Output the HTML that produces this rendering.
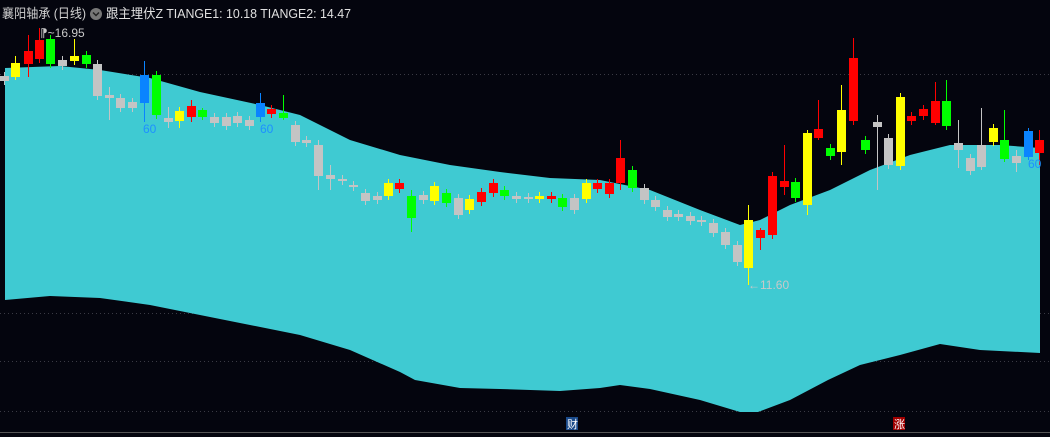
<!DOCTYPE html>
<html><head><meta charset="utf-8"><style>
html,body{margin:0;padding:0;background:#04050e;width:1050px;height:437px;overflow:hidden;font-family:"Liberation Sans","Noto Sans CJK SC",sans-serif}
svg{position:absolute;left:0;top:0}
</style></head><body>
<svg width="1050" height="437" viewBox="0 0 1050 437">
<g stroke="#3a3a44" stroke-dasharray="1,3" stroke-width="1">
<line x1="0" y1="74.5" x2="1050" y2="74.5"/><line x1="0" y1="313.5" x2="1050" y2="313.5"/><line x1="0" y1="361.5" x2="1050" y2="361.5"/><line x1="0" y1="411.5" x2="1050" y2="411.5"/>
</g>
<polygon fill="#3fcad2" points="5,68 60,66 100,70 150,78 200,92 260,105 300,115 350,140 400,155 450,165 500,172 550,178 600,180 650,190 700,210 740,225 760,220 790,205 830,190 870,170 910,155 950,145 1000,145 1040,148 1040,353 980,350 940,344 900,355 860,365 828,380 790,400 758,412 740,412 700,400 650,389 620,385 600,388 560,391 500,389 460,388 415,380 400,372 350,350 300,335 250,325 200,315 150,305 100,298 50,296 5,300"/>
<line x1="0" y1="432.5" x2="1050" y2="432.5" stroke="#555" stroke-width="1"/>
<g id="c" stroke-width="1"></g>
<text x="143" y="133" fill="#1e90ff" font-size="12">60</text>
<text x="260" y="133" fill="#1e90ff" font-size="12">60</text>
<text x="1028" y="168" fill="#1e90ff" font-size="12">60</text>
<text x="40" y="37" fill="#c8c8c8" font-size="12">⁋~16.95</text>
<text x="748" y="289" fill="#c8c8c8" font-size="12">←11.60</text>
<rect x="566" y="417" width="12" height="13" fill="#1a4a8a"/><text x="567" y="428" fill="#fff" font-size="11">财</text>
<rect x="893" y="417" width="12" height="13" fill="#a00000"/><text x="894" y="428" fill="#fff" font-size="11">涨</text>
<text x="2" y="18" fill="#d0d0d0" font-size="13" textLength="84" lengthAdjust="spacingAndGlyphs">襄阳轴承 (日线)</text>
<circle cx="96" cy="14" r="6" fill="#777"/><path d="M93 12.5l3 3 3-3" stroke="#222" stroke-width="1.5" fill="none"/>
<text x="106" y="18" fill="#e0e0e0" font-size="13" textLength="245" lengthAdjust="spacingAndGlyphs">跟主埋伏Z TIANGE1: 10.18 TIANGE2: 14.47</text>
</svg>
<script>
var d=[[4,76,81,'g'],[15,63,77,'y',56,80],[28,51,64,'r',35,77],[39,40,59,'r',28,63],[50,39,64,'G'],[62,60,66,'g'],[74,56,61,'y',39,65],[86,55,64,'G'],[97,64,96,'g'],[109,95,98,'g',87,120],[120,98,108,'g'],[132,102,108,'g'],[144,75,103,'b',61,122],[156,75,115,'G'],[168,118,122,'g',107,128],[179,111,121,'y',107,128],[191,106,117,'r',100,122],[202,110,117,'G',108,120],[214,117,123,'g'],[226,117,126,'g'],[237,116,123,'g'],[249,120,126,'g'],[260,103,117,'b',93,122],[271,109,114,'r'],[283,113,118,'G',95,120],[295,125,142,'g'],[306,140,143,'g'],[318,145,176,'g',140,190],[330,175,179,'g',165,190],[342,179,181,'g'],[353,185,187,'g'],[365,193,201,'g'],[377,196,200,'g'],[388,183,196,'y'],[399,183,189,'r'],[411,196,218,'G',190,232],[423,195,200,'g'],[434,186,201,'y'],[446,193,203,'G'],[458,198,215,'g'],[469,199,210,'y'],[481,192,202,'r'],[493,183,193,'r'],[504,190,196,'G'],[516,196,199,'g'],[528,197,199,'g'],[539,196,199,'y'],[551,196,199,'r'],[562,198,207,'G'],[574,198,210,'g'],[586,183,199,'y'],[597,183,189,'r'],[609,183,194,'r'],[620,158,183,'r',140,190],[632,170,188,'G'],[644,188,200,'g'],[655,200,207,'g'],[667,210,217,'g'],[678,214,217,'g'],[690,216,221,'g'],[701,220,222,'g'],[713,223,233,'g'],[725,232,245,'g'],[737,245,262,'g'],[748,220,268,'y',205,285],[760,230,238,'r',228,250],[772,176,235,'r'],[784,181,187,'r',145,195],[795,182,198,'G'],[807,133,205,'y',130,215],[818,129,138,'r',100,140],[830,148,156,'G'],[841,110,152,'y',85,165],[853,58,121,'r',38,125],[865,140,150,'G'],[877,122,127,'g',115,190],[888,138,165,'g'],[900,97,166,'y'],[911,116,121,'r'],[923,109,116,'r'],[935,101,123,'r',82,125],[946,101,126,'G',80,130],[958,143,150,'g',120,168],[970,158,171,'g'],[981,145,167,'g',108,170],[993,128,142,'y'],[1004,140,159,'G',110,162],[1016,156,163,'g',150,172],[1028,131,157,'b',128,160],[1039,140,153,'r',130,165]];
var col={g:'#c4c4c4',y:'#ffff00',r:'#ff0000',G:'#00ff00',b:'#0a84ff'};
var s='';d.forEach(function(c){var f=col[c[3]];var t=c[4]||c[1]-4,b=c[5]||c[2]+4;
s+='<line x1="'+(c[0]+.5)+'" x2="'+(c[0]+.5)+'" y1="'+t+'" y2="'+b+'" stroke="'+f+'"/>';
s+='<rect x="'+(c[0]-4)+'" y="'+c[1]+'" width="9" height="'+Math.max(2,c[2]-c[1])+'" fill="'+f+'"/>';});
document.getElementById('c').innerHTML=s;
</script>
</body></html>
